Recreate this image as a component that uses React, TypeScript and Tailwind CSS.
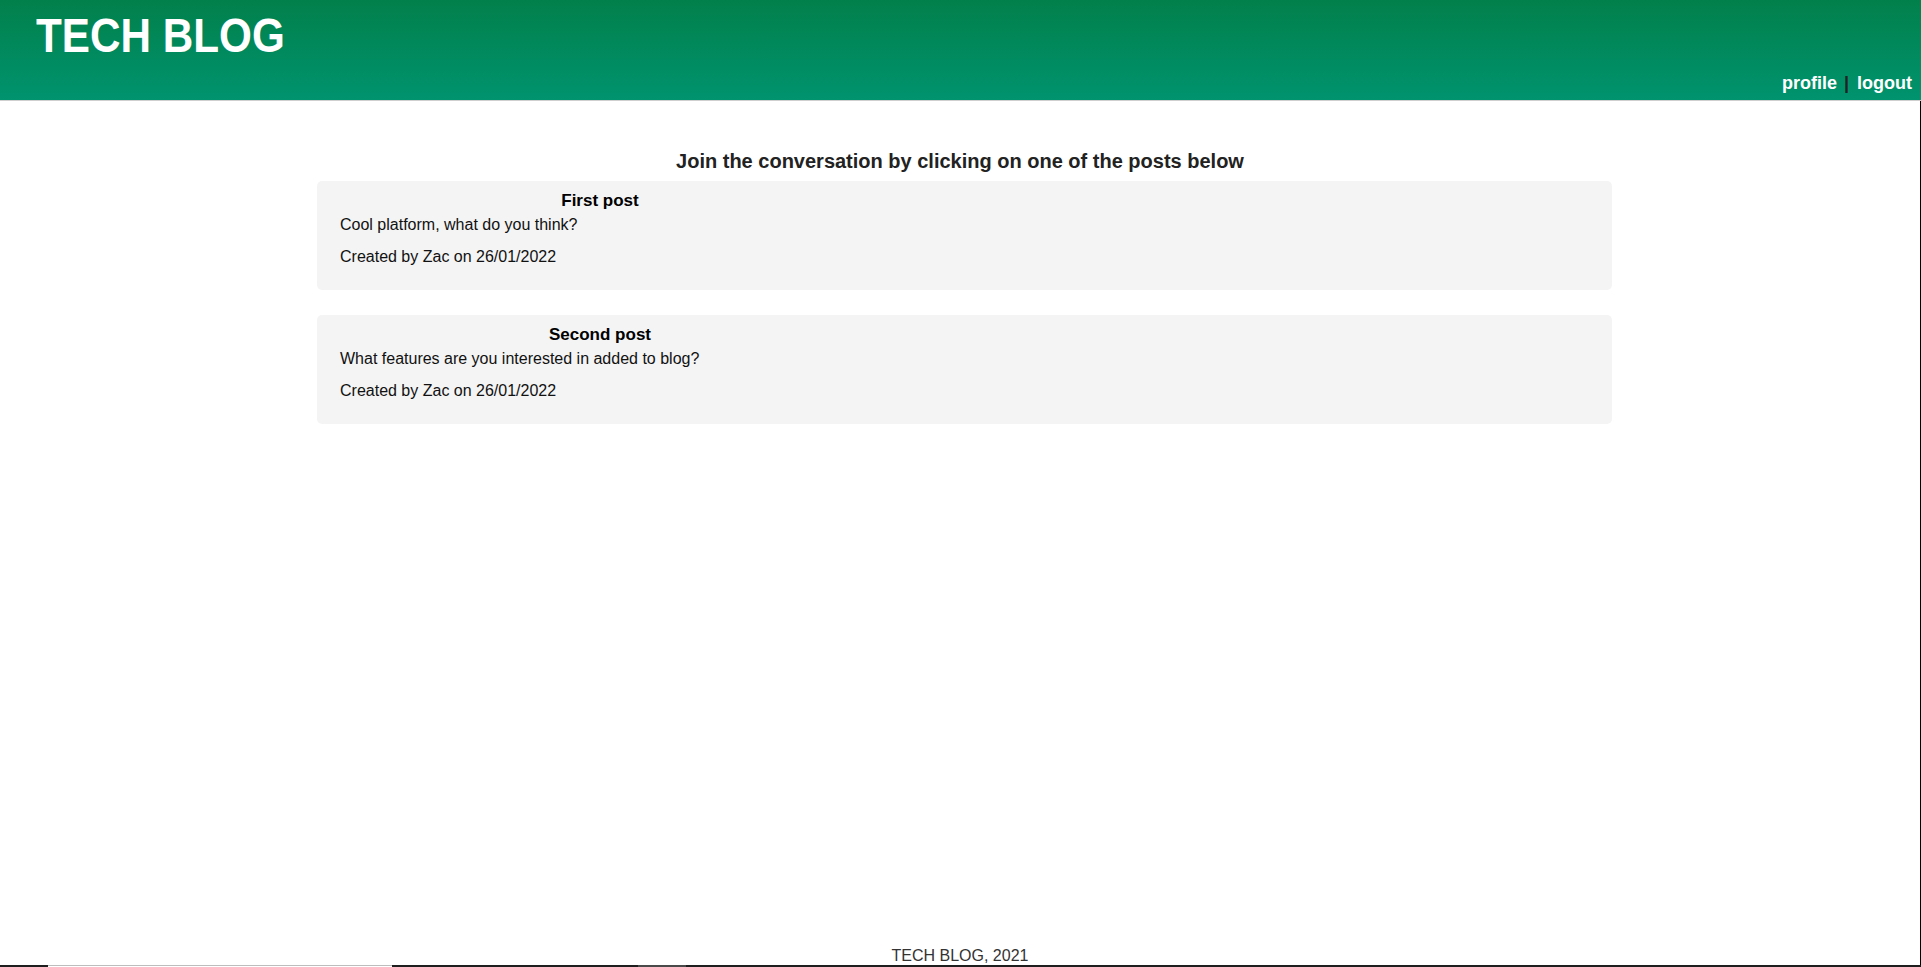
import React from "react";

const posts = [
  { title: "First post", body: "Cool platform, what do you think?", meta: "Created by Zac on 26/01/2022" },
  { title: "Second post", body: "What features are you interested in added to blog?", meta: "Created by Zac on 26/01/2022" },
];

export default function App() {
  return (
    <div className="h-[967px] w-full flex flex-col bg-white overflow-hidden font-['Liberation_Sans',Arial,sans-serif]">
      <header className="h-[101px] shrink-0 border-b border-[#cfcfcf] bg-linear-to-b from-[#02804b] to-[#00936e] flex flex-col justify-between">
        <div className="pt-[12px] pl-[36px]">
          <h1 className="text-[48px] leading-[48px] font-bold text-white scale-x-[0.88] origin-left">TECH BLOG</h1>
        </div>
        <nav className="self-end pr-[9px] pb-[7px] flex items-baseline text-[18px] leading-[20px] font-bold text-white">
          <a>profile</a>
          <span className="mx-[7px] text-[#222]">|</span>
          <a className="ml-[1px]">logout</a>
        </nav>
      </header>
      <main className="flex-1 flex flex-col border-r border-black">
        <h2 className="mt-[48px] text-center text-[20px] leading-[24px] font-bold text-[#222]">
          Join the conversation by clicking on one of the posts below
        </h2>
        <div className="mt-[8px] ml-[317px] w-[1295px] flex flex-col gap-[25px]">
          {posts.map((p) => (
            <div key={p.title} className="rounded-[5px] bg-[#f4f4f4] pt-[10px] pb-[23px] pl-[23px]">
              <div className="w-[520px] text-center text-[17px] leading-[20px] font-bold text-black">{p.title}</div>
              <p className="mt-[4px] text-[16px] leading-[20px] text-[#111]">{p.body}</p>
              <p className="mt-[12px] text-[16px] leading-[20px] text-[#111]">{p.meta}</p>
            </div>
          ))}
        </div>
        <footer className="mt-auto text-center text-[16px] leading-[18px] text-[#333]">TECH BLOG, 2021</footer>
      </main>
      <div className="h-[2px] shrink-0 bg-[#1e1e1e] flex">
        <div className="w-[48px]" />
        <div className="w-[344px] h-[2px] border-t border-[#bdbdbd] bg-white" />
        <div className="w-[246px]" />
        <div className="w-[48px] bg-[#4a4a4a]" />
      </div>
    </div>
  );
}
